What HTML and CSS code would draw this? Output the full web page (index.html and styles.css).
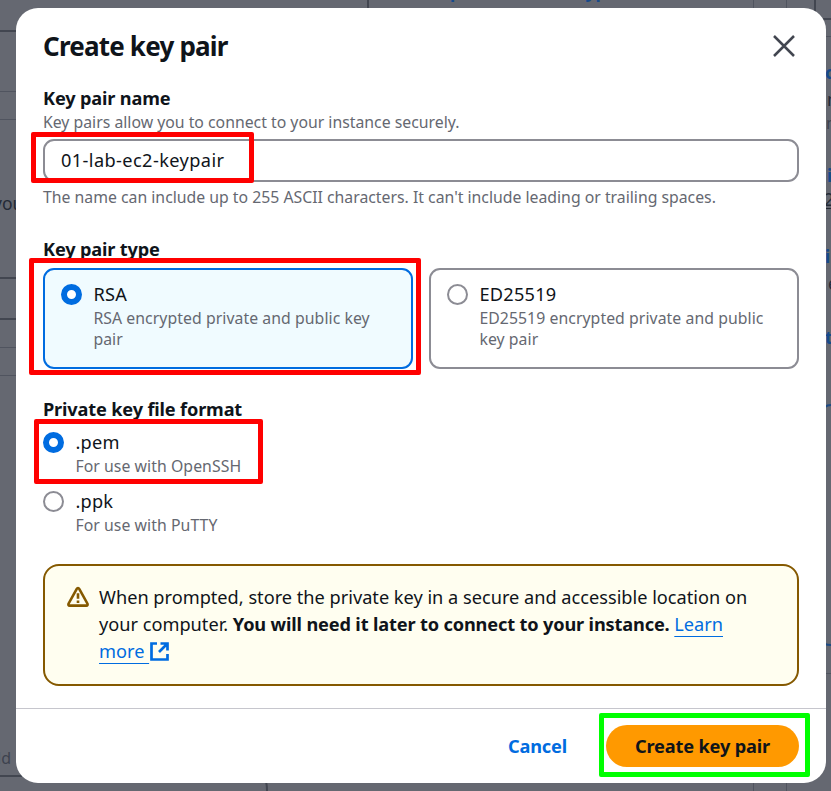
FILE: index.html
```html
<!DOCTYPE html>
<html lang="en">
<head>
<meta charset="utf-8">
<title>Create key pair</title>
<link rel="stylesheet" href="styles.css">
</head>
<body>
<svg class="backdrop" width="831" height="791" viewBox="0 0 831 791" aria-hidden="true">
  <g class="rule-strong">
    <path d="M0 31H20M368 0V10M815 0V19H831M0 278H20M0 319H20M0 776H260Q267 776 267 791"/>
  </g>
  <g class="rule-soft">
    <path d="M753.5 0V10M786.5 0V10M0 91.5H20M0 119.5H20M0 347.5H20M0 375.5H20M824 36.500H831M824 673.500H831M753.500 780V791M786.500 780V791"/>
  </g>
  <path class="rule-blue" d="M825 407Q827 405 831 405M825 644Q827 645 831 645"/>
  <path class="rule-dark" d="M824 208.500H831"/>
  <g class="page-text">
    <text x="-7" y="210">you</text>
    <text class="muted" x="-3" y="764">ld</text>
    <text class="blue" x="578" y="-2">typ</text>
    <text class="blue" x="450" y="-2">p</text>
    <text class="blue" x="825" y="79">c</text>
    <text x="827" y="106">n</text>
    <text class="muted" x="826" y="129">m</text>
    <text class="blue" x="827" y="182">i</text>
    <text x="824" y="206">2</text>
    <text class="blue" x="825" y="263">i</text>
    <text x="828" y="290">e</text>
    <text class="blue" x="825" y="344">t</text>
  </g>
</svg>
<main class="modal" role="dialog" aria-labelledby="title">
  <header class="modal-header">
    <h1 id="title">Create key pair</h1>
    <button class="close" aria-label="Close"><svg width="24" height="24" viewBox="0 0 24 24"><path d="M2 2L22 22M22 2L2 22"/></svg></button>
  </header>
  <div class="modal-body">
    <section class="field">
      <h2 class="label name-label">Key pair name</h2>
      <p class="hint name-hint">Key pairs allow you to connect to your instance securely.</p>
      <div class="input"><span class="value">01-lab-ec2-keypair</span></div>
      <p class="hint constraint">The name can include up to 255 ASCII characters. It can't include leading or trailing spaces.</p>
    </section>
    <section class="field type-field">
      <h2 class="label">Key pair type</h2>
      <div class="tiles">
        <div class="tile selected">
          <span class="radio checked"></span>
          <div class="choice">
            <p class="option">RSA</p>
            <p class="hint">RSA encrypted private and public key pair</p>
          </div>
        </div>
        <div class="tile">
          <span class="radio"></span>
          <div class="choice">
            <p class="option">ED25519</p>
            <p class="hint">ED25519 encrypted private and public key pair</p>
          </div>
        </div>
      </div>
    </section>
    <section class="field format-field">
      <h2 class="label">Private key file format</h2>
      <div class="row">
        <span class="radio checked"></span>
        <div class="choice"><p class="option">.pem</p><p class="hint">For use with OpenSSH</p></div>
      </div>
      <div class="row">
        <span class="radio"></span>
        <div class="choice"><p class="option">.ppk</p><p class="hint">For use with PuTTY</p></div>
      </div>
    </section>
    <div class="alert">
      <svg class="warn" width="22" height="22" viewBox="0 0 16 16"><path d="M8 1.500Q8.600 1.500 9 2.200L14.800 12.700Q15.400 14.200 14 14.300H2Q.6 14.200 1.200 12.700L7 2.200Q7.400 1.500 8 1.500Z"/><path class="mark" d="M8 5.300V9.300M8 10.500V12.300"/></svg>
      <p>When prompted, store the private key in a secure and accessible location on<br>your computer. <strong>You will need it later to connect to your instance.</strong> <a>Learn</a><br><a class="more">more&nbsp;</a><svg class="external" width="21" height="21" viewBox="0 0 21 21"><path d="M8 2.500H2.500V18.500H18.500V13M11.500 2.500H18.500V9.500M18.500 2.500L10 11"/></svg></p>
    </div>
  </div>
  <footer class="modal-footer">
    <button class="cancel">Cancel</button>
    <button class="primary">Create key pair</button>
  </footer>
</main>
<span class="outline outline-name"></span>
<span class="outline outline-type"></span>
<span class="outline outline-format"></span>
<span class="outline outline-submit"></span>
</body>
</html>
```
FILE: styles.css
```css
* { box-sizing: border-box; }
html, body { margin: 0; height: 791px; overflow: hidden; }
body {
  padding: 8px 5px 8px 16px;
  background: #656871;
  color: #0f141a;
  font-family: "Noto Sans", "Open Sans", sans-serif;
  font-size: 18.180px;
  line-height: 27px;
}
h1, h2, p { margin: 0; }
button { font: inherit; border: 0; background: none; padding: 0; }
.backdrop { position: absolute; left: 0; top: 0; }
.backdrop path { fill: none; }
.rule-strong { stroke: #424650; stroke-width: 2; }
.rule-soft { stroke: #50545f; stroke-width: 1; }
.rule-blue { stroke: #1d4a83; stroke-width: 2; }
.rule-dark { stroke: #242932; }
.page-text { font-size: 17.500px; fill: #242a36; }
.page-text .muted { font-size: 16px; fill: #3d424e; }
.page-text .blue { fill: #164a8b; font-weight: 700; }

.modal {
  position: relative;
  display: flex;
  flex-direction: column;
  height: 775px;
  border-radius: 22px;
  background: #fff;
}
.modal-header {
  display: flex;
  justify-content: space-between;
  align-items: center;
  height: 77px;
  padding: 0 30.500px 2px 27px;
}
h1 { font-size: 26px; line-height: 32px; letter-spacing: -.8px; font-weight: 700; }
.close { display: flex; }
.close path { fill: none; stroke: #424650; stroke-width: 2.500; }
.modal-body { flex: 1; padding: 0 27px; }
.label { font-size: 18.150px; line-height: 27px; font-weight: 700; letter-spacing: -.15px; white-space: nowrap; }
.hint { font-size: 15.800px; line-height: 21.500px; color: #656871; }
.choice .hint { letter-spacing: .06px; line-height: 21.200px; }
.option { line-height: 27px; letter-spacing: .25px; }
.value { letter-spacing: .4px; }
.input {
  display: flex;
  align-items: center;
  height: 43px;
  margin: 5px 0;
  padding: 0 16px;
  border: 2px solid #8c8c94;
  border-radius: 11px;
}
.type-field { margin-top: 28px; }
.tiles { display: grid; grid-template-columns: 1fr 1fr; gap: 16px; margin-top: 5px; }
.tile {
  display: flex;
  gap: 11px;
  height: 101px;
  padding: 11px 16px;
  border: 2px solid #8c8c94;
  border-radius: 11px;
}
.tile.selected { border-color: #006ce0; background: #f0fbff; }
.radio {
  flex: none;
  width: 21.400px;
  height: 21.400px;
  margin-top: 3px;
  border: 2px solid #8c8c94;
  border-radius: 50%;
  background: #fff;
}
.radio.checked { border: 6px solid #006ce0; }
.format-field { margin-top: 27px; }
.row { display: flex; gap: 11px; height: 59px; }
.row:nth-child(2) { margin-top: 6px; }
.alert {
  display: flex;
  gap: 10px;
  height: 122px;
  margin-top: 17px;
  padding: 18px 22px;
  border: 2px solid #855900;
  border-radius: 16px;
  background: #fffef0;
  white-space: nowrap;
}
.alert strong { letter-spacing: -.15px; }
.warn { flex: none; margin-top: 2px; }
.warn path { fill: none; stroke: #855900; stroke-width: 1.900; }
.alert a { color: #006ce0; text-decoration: underline; text-decoration-thickness: 1px; text-underline-offset: 5px; }
.external { vertical-align: -4px; }
.external path { fill: none; stroke: #006ce0; stroke-width: 2.700; }
.modal-footer {
  display: flex;
  justify-content: flex-end;
  gap: 39px;
  height: 75px;
  padding: 16px 27px;
  border-top: 1px solid #c6c6cd;
}
.modal-footer button { height: 42px; font-weight: 700; letter-spacing: -.15px; }
.cancel { color: #006ce0; }
.modal-footer .primary { width: 193px; border-radius: 21px; background: #ff9900; color: #0f141a; }

.outline { position: absolute; border: 5px solid #f00; border-radius: 2px; }
.outline-name { left: 31px; top: 132px; width: 223px; height: 51px; }
.outline-type { left: 29px; top: 258px; width: 392px; height: 117px; }
.outline-format { left: 34px; top: 419px; width: 229px; height: 65px; }
.outline-submit { left: 599px; top: 713px; width: 211px; height: 64px; border-color: #0f0; }
```
